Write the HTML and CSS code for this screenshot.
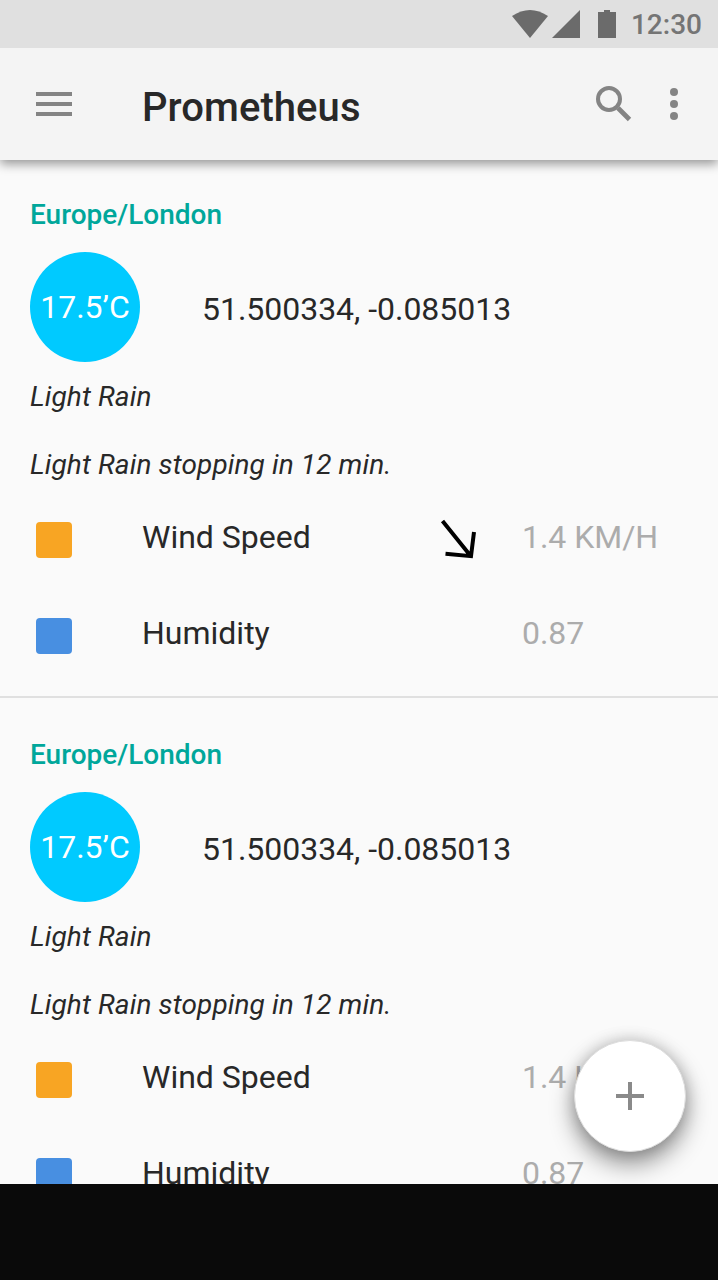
FILE: index.html
```html
<!DOCTYPE html>
<html lang="en">
<head>
<meta charset="utf-8">
<title>Prometheus</title>
<link rel="stylesheet" href="styles.css">
</head>
<body>
<div class="screen">
  <div class="status-bar">
    <svg class="status-icons" width="108" height="48" viewBox="0 0 108 48">
      <path d="M0 16Q18 4 36 16L18 38Z"/>
      <path d="M40 38L68 10V38Z"/>
      <path d="M86 12H92V10H98V12H104V38H86Z"/>
    </svg>
    <span class="clock">12:30</span>
  </div>
  <header class="app-bar">
    <svg class="menu-icon" width="36" height="24" viewBox="0 0 36 24"><path d="M0 0H36V4H0ZM0 10H36V14H0ZM0 20H36V24H0Z"/></svg>
    <h1 class="app-title">Prometheus</h1>
    <svg class="search-icon" width="36" height="36" viewBox="0 0 36 36"><circle cx="13" cy="13" r="11"/><path d="M22 22L33.5 33.5" stroke-width="4.8"/></svg>
    <svg class="more-icon" width="8" height="32" viewBox="0 0 8 32"><circle cx="4" cy="4" r="4"/><circle cx="4" cy="16" r="4"/><circle cx="4" cy="28" r="4"/></svg>
  </header>
  <main class="feed">
    <section class="card">
      <h2 class="zone">Europe/London</h2>
      <div class="current">
        <div class="temp">17.5’C</div>
        <div class="coords">51.500334, -0.085013</div>
      </div>
      <p class="summary">Light Rain</p>
      <p class="forecast">Light Rain stopping in 12 min.</p>
      <div class="metric">
        <span class="swatch wind"></span>
        <span class="label">Wind Speed</span>
        <svg class="arrow" width="36" height="42" viewBox="0 0 36 42"><path d="M2.5 2L30.3 36.5M5.5 34.8L31 37.2L34 13"/></svg>
        <span class="value">1.4 KM/H</span>
      </div>
      <div class="metric">
        <span class="swatch humidity"></span>
        <span class="label">Humidity</span>
        <span class="value">0.87</span>
      </div>
    </section>
    <section class="card">
      <h2 class="zone">Europe/London</h2>
      <div class="current">
        <div class="temp">17.5’C</div>
        <div class="coords">51.500334, -0.085013</div>
      </div>
      <p class="summary">Light Rain</p>
      <p class="forecast">Light Rain stopping in 12 min.</p>
      <div class="metric">
        <span class="swatch wind"></span>
        <span class="label">Wind Speed</span>
        <span class="value">1.4 KM/H</span>
      </div>
      <div class="metric">
        <span class="swatch humidity"></span>
        <span class="label">Humidity</span>
        <span class="value">0.87</span>
      </div>
    </section>
    <button class="fab" aria-label="Add"><svg width="28" height="28" viewBox="0 0 28 28"><path d="M12 0H16V12H28V16H16V28H12V16H0V12H12Z"/></svg></button>
  </main>
  <div class="nav-bar"></div>
</div>
</body>
</html>
```
FILE: styles.css
```css
* { box-sizing: border-box; }
body {
  margin: 0;
  background: #fff;
  font-family: Roboto, sans-serif;
  color: #282828;
}
h1, h2, p { margin: 0; }
.screen {
  width: 718px;
  height: 1280px;
  display: flex;
  flex-direction: column;
  overflow: hidden;
  background: #fafafa;
}
.status-bar {
  flex: none;
  height: 48px;
  display: flex;
  justify-content: flex-end;
  padding-right: 16px;
  background: #e0e0e0;
  z-index: 2;
}
.status-icons { fill: #6b6b6b; margin-right: 11px; }
.clock {
  font-size: 28px;
  font-weight: 500;
  line-height: 49px;
  color: #757575;
}
.app-bar {
  flex: none;
  height: 112px;
  display: flex;
  align-items: center;
  padding: 0 40px 0 36px;
  background: #f4f4f4;
  box-shadow: 0 4px 10px rgba(0, 0, 0, .4);
  z-index: 1;
}
.menu-icon, .more-icon { fill: #848484; }
.app-title {
  flex: 1;
  margin-left: 70px;
  padding-top: 7px;
  font-size: 40px;
  font-weight: 500;
  line-height: 48px;
  letter-spacing: .06px;
}
.search-icon {
  fill: none;
  stroke: #848484;
  stroke-width: 4;
  margin-right: 38px;
}
.feed {
  position: relative;
  flex: 1;
  min-height: 0;
  margin-top: -2px;
  overflow: hidden;
}
.card {
  height: 540px;
  padding-top: 41px;
  border-bottom: 2px solid #e0e0e0;
}
.zone {
  padding-left: 30px;
  font-size: 28px;
  font-weight: 500;
  line-height: 32px;
  color: #00a79b;
}
.current {
  height: 110px;
  display: flex;
  align-items: center;
  gap: 62px;
  margin: 21px 0 19px 30px;
}
.temp {
  width: 110px;
  height: 110px;
  border-radius: 50%;
  background: #00caff;
  color: #fff;
  font-size: 32px;
  line-height: 110px;
  text-align: center;
}
.coords { font-size: 32px; line-height: 40px; padding-top: 4px; letter-spacing: -.03px; }
.summary, .forecast {
  padding-left: 30px;
  font-size: 28px;
  font-style: italic;
  line-height: 32px;
  letter-spacing: .12px;
}
.summary { margin-bottom: 36px; }
.forecast { margin-bottom: 11px; }
.metric {
  height: 96px;
  display: grid;
  grid-template-columns: 106px 298px 82px 1fr;
  align-items: center;
  padding-left: 36px;
  font-size: 32px;
}
.swatch { width: 36px; height: 36px; border-radius: 4px; }
.wind { background: #f8a523; }
.humidity { background: #488fe1; }
.label, .value { line-height: 40px; margin-bottom: 6px; }
.value { grid-column: 4; color: #acacac; letter-spacing: -.03px; }
.arrow { fill: none; stroke: #000; stroke-width: 4; }
.fab {
  position: absolute;
  right: 32px;
  bottom: 32px;
  width: 112px;
  height: 112px;
  padding: 0;
  border: 1px solid #ddd;
  border-radius: 50%;
  background: #fff;
  display: flex;
  align-items: center;
  justify-content: center;
  box-shadow: 0 12px 24px rgba(0, 0, 0, .42), 0 0 16px rgba(0, 0, 0, .18);
}
.fab svg { fill: #8a8a8a; }
.nav-bar { flex: none; height: 96px; background: #0a0a0a; }
```
